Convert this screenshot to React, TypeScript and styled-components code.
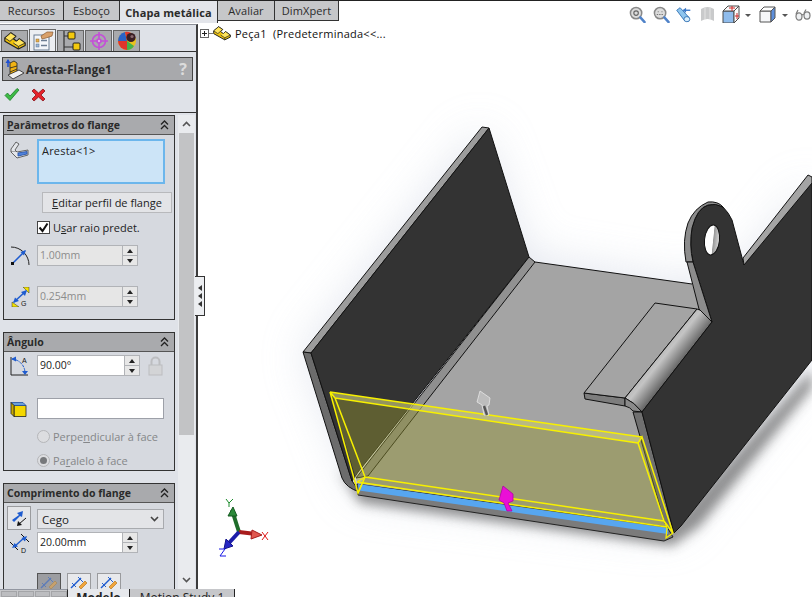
import styled, { createGlobalStyle } from 'styled-components';

const GlobalStyle = createGlobalStyle`
  html, body {
    margin: 0;
    padding: 0;
    background: #fff;
  }
  * {
    box-sizing: border-box;
  }
`;

const Root = styled.div`
  width: 812px;
  height: 597px;
  display: flex;
  flex-direction: column;
  overflow: hidden;
  font-family: 'Open Sans', 'Liberation Sans', sans-serif;
  font-size: 11px;
  color: #222;
  background: #fff;
`;

const TopTabs = styled.div`
  height: 23px;
  flex: none;
  display: flex;
  align-items: flex-start;
  border-top: 1px solid #222;
  background: linear-gradient(to right, #dfe2e8 197px, #fff 197px);
`;

const TopTab = styled.div<{ $width: number; $active?: boolean }>`
  width: ${(p) => p.$width}px;
  height: ${(p) => (p.$active ? 22 : 20)}px;
  display: flex;
  align-items: center;
  justify-content: center;
  font-size: 11px;
  letter-spacing: 0.1px;
  font-weight: ${(p) => (p.$active ? 700 : 400)};
  color: #2b2b2b;
  background: ${(p) => (p.$active ? '#e3e5ea' : '#c6c7c9')};
  border-right: 1px solid #333;
  border-bottom: ${(p) => (p.$active ? 'none' : '1px solid #333')};
`;

const ViewTools = styled.div`
  margin: 4px -3px 0 auto;
  display: flex;
  align-items: center;
`;

const ToolSlot = styled.div<{ $width: number }>`
  width: ${(p) => p.$width}px;
  display: flex;
  align-items: center;
  justify-content: center;
`;

const Caret = styled.span`
  margin-top: 2px;
  border-left: 3px solid transparent;
  border-right: 3px solid transparent;
  border-top: 3px solid #555;
`;

const Main = styled.div`
  flex: 1;
  min-height: 0;
  display: flex;
`;

const Panel = styled.div`
  width: 198px;
  flex: none;
  display: flex;
  flex-direction: column;
  background: #dfe2e8;
  border-top: 1px solid #8b8e96;
  border-right: 2px solid #3c3c3c;
  margin-top: 1px;
`;

const PanelTabs = styled.div`
  height: 27px;
  flex: none;
  display: flex;
  align-items: flex-end;
  gap: 1px;
  padding-left: 1px;
  border-bottom: 1px solid #333;
`;

const PanelTab = styled.div<{ $active?: boolean }>`
  width: 27px;
  height: ${(p) => (p.$active ? 22 : 21)}px;
  display: flex;
  align-items: center;
  justify-content: center;
  background: ${(p) => (p.$active ? '#eceef2' : '#a9aaad')};
  border: 1px solid #666;
  border-bottom: none;
`;

const TitleBar = styled.div`
  height: 24px;
  margin: 5px 3px 0 2px;
  flex: none;
  display: flex;
  align-items: center;
  gap: 1px;
  padding: 0 5px 0 2px;
  background: #a8a9ac;
  border: 1px solid #444;
  font-size: 11.5px;
  font-weight: 700;
  color: #2a2a2a;
`;

const Help = styled.span`
  margin-left: auto;
  font-size: 16px;
  font-weight: 700;
  color: #dcdcdc;
`;

const Actions = styled.div`
  height: 32px;
  flex: none;
  display: flex;
  align-items: center;
  gap: 11px;
  padding: 0 0 4px 4px;
  border-bottom: 1px solid #333;
`;

const ScrollArea = styled.div`
  flex: 1;
  min-height: 0;
  display: flex;
  overflow: hidden;
  padding-top: 2px;
`;

const Sections = styled.div`
  width: 178px;
  flex: none;
  display: flex;
  flex-direction: column;
  gap: 12px;
  padding-left: 3px;
`;

const Section = styled.section<{ $height: number }>`
  width: 172px;
  height: ${(p) => p.$height}px;
  flex: none;
  background: #d6d9df;
  border: 1px solid #333;
`;

const SectionHead = styled.div`
  height: 19px;
  display: flex;
  align-items: center;
  justify-content: space-between;
  padding: 0 5px 0 3px;
  background: #a9aaad;
  border-bottom: 1px solid #555;
  font-size: 10.5px;
  font-weight: 700;
  color: #2a2a2a;
`;

const Row = styled.div<{ $top: number }>`
  display: flex;
  align-items: center;
  margin-top: ${(p) => p.$top}px;
  padding-left: 33px;
  position: relative;
`;

const RowIcon = styled.div<{ $top?: boolean }>`
  position: absolute;
  left: 6px;
  top: ${(p) => (p.$top ? '2px' : '50%')};
  transform: ${(p) => (p.$top ? 'none' : 'translateY(-50%)')};
  display: flex;
`;

const SelectionBox = styled.div`
  width: 128px;
  height: 45px;
  padding: 2px 3px;
  background: #cce4f7;
  border: 2px solid #6cb6ec;
  letter-spacing: 0.2px;
`;

const FlatButton = styled.div`
  width: 130px;
  height: 21px;
  margin-left: 5px;
  display: flex;
  align-items: center;
  justify-content: center;
  background: #e3e4e7;
  border: 1px solid #b8b9bc;
`;

const CheckLabel = styled.label`
  display: flex;
  align-items: center;
  gap: 3px;
`;

const CheckBox = styled.span`
  width: 13px;
  height: 13px;
  display: flex;
  align-items: center;
  justify-content: center;
  background: #fff;
  border: 1px solid #444;
`;

const Spin = styled.div<{ $disabled?: boolean; $width?: number }>`
  width: ${(p) => p.$width ?? 101}px;
  height: 21px;
  display: flex;
  background: ${(p) => (p.$disabled ? '#e6e6e6' : '#fff')};
  color: ${(p) => (p.$disabled ? '#8c8c8c' : '#222')};
  border: 1px solid #b1b3b7;
  font-size: 10.5px;
`;

const SpinText = styled.div`
  flex: 1;
  padding-left: 2px;
  line-height: 18px;
`;

const SpinButtons = styled.div`
  width: 15px;
  display: flex;
  flex-direction: column;
  border-left: 1px solid #b1b3b7;
  background: #e7e7e7;
`;

const SpinButton = styled.div<{ $down?: boolean }>`
  flex: 1;
  display: flex;
  align-items: center;
  justify-content: center;
  border-top: ${(p) => (p.$down ? '1px solid #b1b3b7' : 'none')};
  &::after {
    content: '';
    border-left: 3px solid transparent;
    border-right: 3px solid transparent;
    border-${(p) => (p.$down ? 'top' : 'bottom')}: 4px solid #222;
  }
`;

const LockSlot = styled.div`
  margin-left: 8px;
  display: flex;
`;

const TextField = styled.div`
  width: 127px;
  height: 21px;
  background: #fff;
  border: 1px solid #9da0a8;
`;

const RadioLabel = styled.div`
  display: flex;
  align-items: center;
  gap: 3px;
  color: #858789;
`;

const Radio = styled.span<{ $on?: boolean }>`
  width: 13px;
  height: 13px;
  display: flex;
  align-items: center;
  justify-content: center;
  border-radius: 50%;
  background: #dcdde0;
  border: 1px solid #b5b6b9;
  &::after {
    content: '';
    width: 7px;
    height: 7px;
    border-radius: 50%;
    background: ${(p) => (p.$on ? '#77797c' : 'transparent')};
  }
`;

const SquareButton = styled.div`
  position: absolute;
  left: 3px;
  top: -3px;
  width: 24px;
  height: 24px;
  display: flex;
  align-items: center;
  justify-content: center;
  background: #e4e5e8;
  border: 1px solid #9a9b9e;
`;

const SelectBox = styled.div`
  width: 127px;
  height: 20px;
  display: flex;
  align-items: center;
  justify-content: space-between;
  padding: 0 4px;
  background: #e3e4e7;
  border: 1px solid #a8aaae;
  font-size: 11.5px;
`;

const ToolRow = styled.div`
  display: flex;
  gap: 6px;
  margin: 20px 0 0 33px;
`;

const ToolButton = styled.div<{ $pressed?: boolean }>`
  width: 24px;
  height: 20px;
  display: flex;
  align-items: center;
  justify-content: center;
  background: ${(p) => (p.$pressed ? '#9c9da1' : '#e8e9ec')};
  border: 1px solid ${(p) => (p.$pressed ? '#555' : '#9a9b9e')};
`;

const ScrollBar = styled.div`
  width: 17px;
  flex: none;
  display: flex;
  flex-direction: column;
  background: #e9ebee;
`;

const ScrollArrow = styled.div`
  height: 18px;
  flex: none;
  display: flex;
  align-items: center;
  justify-content: center;
`;

const ScrollThumb = styled.div`
  height: 302px;
  margin: 0 1px;
  flex: none;
  background: #c2c3c5;
`;

const ScrollTrack = styled.div`
  flex: 1;
`;

const Viewport = styled.div`
  flex: 1;
  min-width: 0;
  position: relative;
  background: #fff;
`;

const ModelCanvas = styled.svg`
  position: absolute;
  inset: 0;
  width: 100%;
  height: 100%;
`;

const CollapseHandle = styled.div`
  position: absolute;
  left: -3px;
  top: 253px;
  width: 10px;
  height: 40px;
  display: flex;
  flex-direction: column;
  align-items: center;
  justify-content: center;
  gap: 2px;
  background: #eceef1;
  border: 1px solid #333;
  border-left: none;
`;

const HandleArrow = styled.span`
  border-top: 3px solid transparent;
  border-bottom: 3px solid transparent;
  border-right: 4px solid #333;
`;

const Tree = styled.div`
  position: absolute;
  left: 2px;
  top: 3px;
  display: flex;
  align-items: center;
  font-size: 11px;
  letter-spacing: 0.25px;
  color: #111;
`;

const Expander = styled.span`
  width: 9px;
  height: 9px;
  border: 1px solid #666;
  background: linear-gradient(#222, #222) center / 5px 1px no-repeat,
    linear-gradient(#222, #222) center / 1px 5px no-repeat, #fff;
`;

const TreeLink = styled.span`
  width: 4px;
  height: 1px;
  background: #777;
`;

const TreeText = styled.span`
  margin-left: 4px;
  white-space: pre;
`;

const BottomTabs = styled.div`
  height: 8px;
  flex: none;
  display: flex;
  overflow: hidden;
  background: #fff;
`;

const NavGroup = styled.div`
  width: 68px;
  display: flex;
  gap: 1px;
  padding: 1px 0 0 1px;
  background: #c6c7ca;
  border-right: 1px solid #222;
  border-top: 1px solid #9296a0;
`;

const NavButton = styled.span`
  width: 16px;
  background: #bcbdc0;
  border: 1px solid #a4a5a8;
`;

const BottomTab = styled.div<{ $width: number; $active?: boolean }>`
  width: ${(p) => p.$width}px;
  padding-top: 1px;
  text-align: center;
  font-size: 12px;
  line-height: 16px;
  font-weight: ${(p) => (p.$active ? 700 : 400)};
  background: ${(p) => (p.$active ? '#e6e8ec' : '#c6c7ca')};
  border-right: 1px solid #222;
`;

const PartIcon = ({ size = 26 }: { size?: number }) => (
  <svg width={size} height={size * 0.81} viewBox="0 0 26 21">
    <path d="M1 7 L8 1 L14 5 L11 8 L15 11 L18 8 L25 13 V16 L17 20 L1 11 Z" fill="#f0c20a" stroke="#222" strokeWidth="1.4" strokeLinejoin="round" />
    <path d="M1 7 L8 1 L14 5 L7 11 Z" fill="#ffe45c" stroke="#222" strokeWidth="1" strokeLinejoin="round" />
    <path d="M15 11 L18 8 L25 13 L17 17 L11 13" fill="#ffe45c" stroke="#222" strokeWidth="1" strokeLinejoin="round" />
    <path d="M17 17 V20" stroke="#222" strokeWidth="1" />
  </svg>
);

const PropertyIcon = () => (
  <svg width="22" height="20" viewBox="0 0 22 20">
    <rect x="2" y="4" width="15" height="15" fill="#f4f6fa" stroke="#6b7c92" />
    <rect x="4" y="8" width="3" height="3" fill="#e8b04c" stroke="#8a6a30" strokeWidth=".5" />
    <rect x="4" y="13" width="3" height="3" fill="#9db7d6" stroke="#56708f" strokeWidth=".5" />
    <path d="M9 9.5 H15 M9 14.5 H15" stroke="#6b7c92" strokeWidth="1.5" />
    <path d="M9 5 L15 1 L21 1 L20 5 L14 7 L10 8 Z" fill="#d9a06a" stroke="#8a5a30" strokeWidth=".7" />
  </svg>
);

const TreeTabIcon = () => (
  <svg width="22" height="21" viewBox="0 0 22 21">
    <path d="M4 0 V20 M4 5 H9 M4 16 H14" stroke="#333" strokeWidth="1.2" fill="none" />
    <rect x="8" y="1" width="7" height="7" rx="1" fill="#f3c90c" stroke="#222" />
    <rect x="13" y="12" width="7" height="7" rx="1" fill="#f3c90c" stroke="#222" />
  </svg>
);

const CrosshairIcon = () => (
  <svg width="20" height="20" viewBox="0 0 20 20" fill="none" stroke="#c44fd8" strokeWidth="1.6">
    <circle cx="10" cy="10" r="6.5" />
    <path d="M10 1 V19 M1 10 H19" />
    <circle cx="10" cy="10" r="2" fill="#e6a6ee" />
  </svg>
);

const AppearanceIcon = () => (
  <svg width="20" height="20" viewBox="0 0 20 20">
    <circle cx="10" cy="10" r="9" fill="#e9c21c" />
    <path d="M10 10 L1 10 A9 9 0 0 1 8 1 Z" fill="#2a63c8" />
    <path d="M10 10 L8 1 A9 9 0 0 1 14 2 Z" fill="#e0352b" />
    <path d="M10 10 L1 10 A9 9 0 0 0 10 19 Z" fill="#e0352b" />
    <path d="M10 19 A9 9 0 0 0 17 15 L10 10 Z" fill="#45b34a" />
    <circle cx="14" cy="6.5" r="4.6" fill="#3a1f24" />
    <circle cx="15" cy="5.5" r="1.6" fill="#8a6a70" />
  </svg>
);

const FlangeIcon = () => (
  <svg width="20" height="21" viewBox="0 0 20 21">
    <path d="M3 1 V8" stroke="#1f4fd0" strokeWidth="1.5" />
    <path d="M0.5 4 L3 0 L5.5 4 Z" fill="#1f4fd0" />
    <path d="M5 4 L9 2 L12 4 V13 L5 17 Z" fill="#f2b312" stroke="#222" strokeWidth=".8" />
    <path d="M5 9 L12 7 M5 13 L12 10" stroke="#222" strokeWidth=".8" />
    <path d="M3 16 L14 11 L19 14 L8 20 Z" fill="#f0f0f0" stroke="#222" strokeWidth=".8" />
  </svg>
);

const CheckIcon = () => (
  <svg width="16" height="15" viewBox="0 0 16 14">
    <path d="M1 8 L3.5 5.5 L6 8.5 L13 1 L15 2.5 L6 13 Z" fill="#3dbb45" stroke="#1c7c28" strokeWidth=".8" strokeLinejoin="round" />
  </svg>
);

const CrossIcon = () => (
  <svg width="15" height="14" viewBox="0 0 15 14">
    <path d="M1 3 L3 1 L7.5 5 L12 1 L14 3 L10 7 L14 11 L12 13 L7.5 9 L3 13 L1 11 L5 7 Z" fill="#e5222a" stroke="#8c1218" strokeWidth=".8" strokeLinejoin="round" />
  </svg>
);

const CollapseIcon = () => (
  <svg width="9" height="10" viewBox="0 0 9 10" fill="none" stroke="#222" strokeWidth="1.3">
    <path d="M1 4.5 L4.5 1 L8 4.5 M1 9 L4.5 5.5 L8 9" />
  </svg>
);

const EdgeSelectIcon = () => (
  <svg width="19" height="18" viewBox="0 0 19 18" fill="#e4e6ea" stroke="#555" strokeWidth=".9">
    <path d="M1 8 L6 1 L9 3 L5 9 L7 11 L1 11 Z" />
    <path d="M1 11 L7 17 L18 14 L18 9 L7 11" />
    <path d="M8 12 L17 10.5 L17 13 L8 15 Z" fill="#4f83dd" stroke="#2a55a8" />
  </svg>
);

const RadiusIcon = () => (
  <svg width="20" height="20" viewBox="0 0 20 20" fill="none">
    <path d="M1 1 A18 18 0 0 1 19 19" stroke="#222" />
    <path d="M3 17 L15 5" stroke="#1f5ccf" strokeWidth="1.5" />
    <path d="M16 4 L10.5 6 L14 9.5 Z" fill="#1f5ccf" />
    <rect x="1" y="16" width="3" height="3" fill="#111" />
  </svg>
);

const GapIcon = () => (
  <svg width="20" height="20" viewBox="0 0 20 20">
    <path d="M2 15 L9 20 L2 20 Z M13 0 L19 0 L19 6 Z" fill="#f4e200" stroke="#333" strokeWidth=".5" />
    <path d="M4 15 L16 4" stroke="#1f5ccf" strokeWidth="1.5" />
    <path d="M3 16 L5 10.5 L9 14 Z M17 3 L11 5 L15 9 Z" fill="#1f5ccf" />
    <text x="11" y="19" fontSize="7" fontFamily="Liberation Sans" fill="#111">G</text>
  </svg>
);

const AngleIcon = () => (
  <svg width="19" height="20" viewBox="0 0 19 20" fill="none">
    <path d="M1 1 V19 H18" stroke="#222" />
    <path d="M2 3 A14 14 0 0 1 15 17" stroke="#1f5ccf" strokeDasharray="3 1" />
    <path d="M1 3 L6 0.5 L6 5.5 Z M15 19 L12 15 L18 15 Z" fill="#1f5ccf" />
    <text x="12" y="7" fontSize="7" fontFamily="Liberation Sans" fill="#111">A</text>
  </svg>
);

const CubeIcon = () => (
  <svg width="17" height="17" viewBox="0 0 17 17">
    <path d="M4 5 H16 V16 H4 Z" fill="#f4d700" stroke="#222" strokeWidth=".8" />
    <path d="M1 2 L13 2 L16 5 H4 Z" fill="#6b9fd9" stroke="#1f4fa0" strokeWidth=".8" />
    <path d="M1 2 L4 5 V16 L1 13 Z" fill="#c9aa00" stroke="#222" strokeWidth=".8" />
  </svg>
);

const LockIcon = () => (
  <svg width="15" height="20" viewBox="0 0 15 20">
    <path d="M3.5 9 V5.5 A4 4 0 0 1 11.5 5.5 V9" fill="none" stroke="#bcbdc0" strokeWidth="2" />
    <rect x="1" y="9" width="13" height="10" fill="#d3d4d6" stroke="#bcbdc0" />
  </svg>
);

const DirectionIcon = () => (
  <svg width="16" height="16" viewBox="0 0 16 16">
    <path d="M1 10 L8 5 L6 3 L12 1 L11 7 L9 6 L3 12 Z" fill="#1f5ccf" />
    <path d="M15 8 L8 14" stroke="#111" />
    <path d="M6 16 L7 11 L11 15 Z" fill="#111" />
  </svg>
);

const DepthIcon = () => (
  <svg width="20" height="20" viewBox="0 0 20 20">
    <path d="M0 9 L8 17 M11 1 L19 9" stroke="#111" />
    <path d="M4 14 L15 4" stroke="#1f5ccf" strokeWidth="1.4" />
    <path d="M2 15 L4.5 10 L8 13.5 Z M17 3 L11.5 5 L15 8.5 Z" fill="#1f5ccf" />
    <text x="11" y="20" fontSize="7" fontFamily="Liberation Sans" fill="#111">D</text>
  </svg>
);

const FlangePositionIcon = ({ faded }: { faded?: boolean }) => (
  <svg width="18" height="16" viewBox="0 0 18 16" opacity={faded ? 0.5 : 1}>
    <path d="M1 13 L11 3" stroke="#1f5ccf" strokeWidth="1.5" />
    <path d="M2 8 L6 12 M8 2 L13 7" stroke="#1f5ccf" />
    <path d="M9 12 L15 6 L17 8 L11 14 Z" fill="#f2a53a" stroke="#a86a10" strokeWidth=".6" />
  </svg>
);

const Magnifier = ({ variant }: { variant?: 'fit' | 'area' }) => (
  <svg width="17" height="18" viewBox="0 0 18 19">
    <circle cx="7.5" cy="7.5" r="6" fill="#dcdcdc" stroke="#888" strokeWidth="1.6" />
    {variant === 'fit' ? (
      <circle cx="7.5" cy="7.5" r="2.4" fill="none" stroke="#666" strokeWidth="1.2" />
    ) : (
      <path d="M4 9 H11 M5 6 H6 M9 6 H10" stroke="#777" strokeWidth="1.2" strokeDasharray="1.5 1" />
    )}
    <path d="M12 12 L16.5 17" stroke="#4f82c8" strokeWidth="2.6" strokeLinecap="round" />
  </svg>
);

const PreviousViewIcon = () => (
  <svg width="17" height="17" viewBox="0 0 20 20">
    <path d="M2 5 L6 2 L16 13 L16 18 L11 17 Z" fill="#8ec5ee" stroke="#2b6cb0" />
    <ellipse cx="14" cy="15.5" rx="3.5" ry="3" fill="#d8eefc" stroke="#2b6cb0" />
    <path d="M10 5 H18" stroke="#3b78c8" strokeWidth="1.6" />
    <path d="M9 5 L13 2 V8 Z" fill="#3b78c8" />
  </svg>
);

const SectionViewIcon = () => (
  <svg width="15" height="17" viewBox="0 0 15 17">
    <path d="M1 3 Q7.5 -1 14 3 V15 Q7.5 11 1 15 Z" fill="#c9cacb" />
    <path d="M5 2 V13 M10 2 V13" stroke="#e4e4e4" />
  </svg>
);

const OrientIcon = () => (
  <svg width="18" height="19" viewBox="0 0 18 19">
    <path d="M1 6 H12 V18 H1 Z" fill="#8fbcec" stroke="#4a4a4a" />
    <path d="M1 6 L6 1 H17 L12 6 Z" fill="#f8f8f8" stroke="#4a4a4a" />
    <path d="M12 6 L17 1 V13 L12 18 Z" fill="#fbfbfb" stroke="#4a4a4a" />
    <path d="M7 3 H13 M10 1 V6 M13 11 H17 M15 8 V14" stroke="#d02a2a" />
  </svg>
);

const DisplayIcon = () => (
  <svg width="17" height="17" viewBox="0 0 17 17">
    <path d="M1 5 H12 V16 H1 Z" fill="#f6f7f9" stroke="#555" />
    <path d="M1 5 L5 1 H16 L12 5 Z" fill="#fff" stroke="#555" />
    <path d="M12 5 L16 1 V12 L12 16 Z" fill="#5d8fdc" stroke="#555" />
  </svg>
);

const GlassesIcon = () => (
  <svg width="16" height="12" viewBox="0 0 16 12" fill="#eef0f2" stroke="#7c7c7c" strokeWidth="1.2">
    <ellipse cx="4" cy="7.5" rx="3" ry="3.6" />
    <ellipse cx="12" cy="6.5" rx="3" ry="3.6" />
    <path d="M7 6 L9 5 M1 5 L3 1 M9 4 L11 0.5" fill="none" />
  </svg>
);

const Model = () => (
  <ModelCanvas viewBox="198 23 614 566">
    <defs>
      <filter id="softHalo" x="-40%" y="-40%" width="180%" height="180%">
        <feGaussianBlur stdDeviation="22" />
      </filter>
      <filter id="softShadow" x="-20%" y="-20%" width="140%" height="140%">
        <feGaussianBlur stdDeviation="6" />
      </filter>
      <linearGradient id="leftFold" x1="0" y1="0" x2="1" y2="0.8">
        <stop offset="0" stopColor="#555" />
        <stop offset="0.5" stopColor="#8c8c8c" />
        <stop offset="1" stopColor="#a8a8a8" />
      </linearGradient>
      <linearGradient id="tabFold" gradientUnits="userSpaceOnUse" x1="655" y1="345" x2="680" y2="365">
        <stop offset="0" stopColor="#a8a8a8" />
        <stop offset="0.45" stopColor="#c4c4c4" />
        <stop offset="1" stopColor="#5f5f5f" />
      </linearGradient>
      <linearGradient id="holeWall" x1="0" y1="0" x2="1" y2="0">
        <stop offset="0" stopColor="#fff" />
        <stop offset="0.55" stopColor="#fff" />
        <stop offset="0.6" stopColor="#999" />
        <stop offset="1" stopColor="#ddd" />
      </linearGradient>
    </defs>

    <path d="M303 352 L482 127 L529 257 L692 284 L744 265 L812 180 V360 L673 533 L358 493 Z" fill="#cdd3e2" opacity="0.55" filter="url(#softHalo)" />
    <path d="M338 470 L360 503 L672 546 L700 526 L812 388 L812 370 L672 525 L358 485 Z" fill="#4a4a4a" opacity="0.6" filter="url(#softShadow)" />

    <path d="M482 127 L489 128 L311 353 L303 352 Z" fill="#9c9c9c" stroke="#111" strokeLinejoin="round" />
    <path d="M303 352 L311 353 L352 481 L360 492 Q346 488 342 478 Z" fill="#6c6c6c" stroke="#111" strokeLinejoin="round" />
    <path d="M489 128 L529 257 L358 472 L352 481 L311 353 Z" fill="#333" stroke="#111" strokeLinejoin="round" />

    <path d="M535 262 L692 284 L712 322 L642 412 L668 528 L358 486 L368 474 Z" fill="#a4a4a4" />
    <path d="M535 262 L692 284" stroke="#111" fill="none" />
    <path d="M529 257 L535 262 L368 476 L356 478 Z" fill="url(#leftFold)" stroke="#111" strokeLinejoin="round" />

    <path d="M357 484 L667 527 L673 537 L664 541 L358 495 Z" fill="#7b7b7b" stroke="#222" strokeLinejoin="round" />
    <path d="M358 484 L668 528 L668 534 L359 490.5 Z" fill="#57a6ef" />

    <path d="M584 393 L625 398 L625 406 L585 399 Z" fill="#7d7d7d" stroke="#111" strokeLinejoin="round" />
    <path d="M655 303 L697 309 L625 398 L584 393 Z" fill="#a4a4a4" stroke="#111" strokeLinejoin="round" />
    <path d="M697 309 Q706 311 712 322 L642 412 Q634 402 625 398 Z" fill="url(#tabFold)" stroke="#111" strokeLinejoin="round" />
    <path d="M625 398 Q634 402 642 412 L633 411 Q630 407 625 406 Z" fill="#8a8a8a" stroke="#111" strokeLinejoin="round" />

    <path d="M633 412 L642 412 L674 532 L665 524 Z" fill="#707070" stroke="#111" strokeLinejoin="round" />
    <path d="M642 412 L712 322 L693 262 Q689 245 692 228 Q697 208 708 205 Q718 203 723 207 Q729 213 732 220 L744 265 L812 180 V360 L681 526 L674 533 Z" fill="#333" stroke="#111" strokeLinejoin="round" />
    <path d="M686 262 Q682 240 688 223 Q694 208 708 202 Q718 201 723 207 Q716 203 708 205 Q697 208 692 228 Q689 245 693 262 Z" fill="#8c8c8c" stroke="#111" strokeLinejoin="round" />
    <path d="M687 262 L693 262 L712 322 L699 309 Z" fill="#8c8c8c" stroke="#111" strokeLinejoin="round" />
    <path d="M743 258 L808 175 L812 177 V183 L744 265 Z" fill="#a4a4a4" stroke="#111" strokeLinejoin="round" />
    <ellipse cx="712" cy="240" rx="7.5" ry="15" transform="rotate(6 712 240)" fill="url(#holeWall)" stroke="#111" />

    <path d="M330 392 L642 437 L667 527 L357 482 Z" fill="rgb(145,145,51)" fillOpacity="0.46" />
    <path d="M330 392 L642 437 L638 443 L335 398 Z" fill="#e6e6a0" fillOpacity="0.4" />
    <path d="M330 392 L642 437 M335 398 L638 443 M330 392 L335 398 L365 477 L358 493 Z M642 437 L638 443 L664 521 L673 533 Z M365 477 L664 521 M357 482 L667 527" fill="none" stroke="#f7f000" strokeWidth="1.5" />
    <path d="M357 482 L365 477 M664 521 L667 527 M358 493 L362 484 M673 533 L666 538 L667 527" fill="none" stroke="#f7f000" strokeWidth="1.2" />

    <path d="M480 391 L490 398 L489 405 L487 406 L489 415 L484 415 L482 405 L477 402 Z" fill="#bdbdbd" stroke="#e6e6e6" strokeWidth=".8" />
    <path d="M484 406 L487 415" stroke="#555" strokeWidth="2.4" />
    <path d="M503 486 L513 494 L513 501 L508 503 L512 511 L507 511 L504 503 L499 500 Z" fill="#ea0fd6" stroke="#b400a4" strokeWidth=".8" />

    <path d="M239 532 L232 510" stroke="#1f6d2a" strokeWidth="4" />
    <path d="M233 507 L237 516 L228 516 Z" fill="#2c8a3a" stroke="#155a20" />
    <path d="M226 499 L229 503 L233 499 M229 503 V507" fill="none" stroke="#1a8a2a" />
    <path d="M239 532 L256 534" stroke="#a81c1c" strokeWidth="4" />
    <path d="M262 535 L252 530 L251 539 Z" fill="#e0584f" stroke="#a81c1c" />
    <path d="M262 532 L268 540 M268 532 L262 540" stroke="#e01414" />
    <path d="M239 532 L228 544" stroke="#1c1ca8" strokeWidth="4" />
    <path d="M224 549 L226 539 L233 546 Z" fill="#2626c4" stroke="#14148a" />
    <path d="M219 549 H225 L220 556 H226 M218 556" fill="none" stroke="#1414e6" />
  </ModelCanvas>
);

const App = () => {
  return (
    <Root>
      <GlobalStyle />
      <TopTabs>
        <TopTab $width={64}>Recursos</TopTab>
        <TopTab $width={56}>Esboço</TopTab>
        <TopTab $width={98} $active>Chapa metálica</TopTab>
        <TopTab $width={57}>Avaliar</TopTab>
        <TopTab $width={64}>DimXpert</TopTab>
        <ViewTools>
          <ToolSlot $width={24}><Magnifier variant="fit" /></ToolSlot>
          <ToolSlot $width={24}><Magnifier variant="area" /></ToolSlot>
          <ToolSlot $width={21}><PreviousViewIcon /></ToolSlot>
          <ToolSlot $width={26}><SectionViewIcon /></ToolSlot>
          <ToolSlot $width={21}><OrientIcon /></ToolSlot>
          <ToolSlot $width={14}><Caret /></ToolSlot>
          <ToolSlot $width={24}><DisplayIcon /></ToolSlot>
          <ToolSlot $width={12}><Caret /></ToolSlot>
          <ToolSlot $width={24}><GlassesIcon /></ToolSlot>
        </ViewTools>
      </TopTabs>
      <Main>
        <Panel>
          <PanelTabs>
            <PanelTab><PartIcon size={22} /></PanelTab>
            <PanelTab $active><PropertyIcon /></PanelTab>
            <PanelTab><TreeTabIcon /></PanelTab>
            <PanelTab><CrosshairIcon /></PanelTab>
            <PanelTab><AppearanceIcon /></PanelTab>
          </PanelTabs>
          <TitleBar>
            <FlangeIcon />
            Aresta-Flange1
            <Help>?</Help>
          </TitleBar>
          <Actions>
            <CheckIcon />
            <CrossIcon />
          </Actions>
          <ScrollArea>
            <Sections>
              <Section $height={205}>
                <SectionHead>
                  <span><u>P</u>arâmetros do flange</span>
                  <CollapseIcon />
                </SectionHead>
                <Row $top={4}>
                  <RowIcon $top><EdgeSelectIcon /></RowIcon>
                  <SelectionBox>Aresta&lt;1&gt;</SelectionBox>
                </Row>
                <Row $top={8}>
                  <FlatButton><span><u>E</u>ditar perfil de flange</span></FlatButton>
                </Row>
                <Row $top={7}>
                  <CheckLabel>
                    <CheckBox>
                      <svg width="11" height="11" viewBox="0 0 11 11">
                        <path d="M1.5 5.5 L4.5 9 L9.5 1.5" fill="none" stroke="#111" strokeWidth="2" />
                      </svg>
                    </CheckBox>
                    <span>U<u>s</u>ar raio predet.</span>
                  </CheckLabel>
                </Row>
                <Row $top={10}>
                  <RowIcon><RadiusIcon /></RowIcon>
                  <Spin $disabled>
                    <SpinText>1.00mm</SpinText>
                    <SpinButtons><SpinButton /><SpinButton $down /></SpinButtons>
                  </Spin>
                </Row>
                <Row $top={20}>
                  <RowIcon><GapIcon /></RowIcon>
                  <Spin $disabled>
                    <SpinText>0.254mm</SpinText>
                    <SpinButtons><SpinButton /><SpinButton $down /></SpinButtons>
                  </Spin>
                </Row>
              </Section>
              <Section $height={139}>
                <SectionHead>
                  <span>Ân<u>g</u>ulo</span>
                  <CollapseIcon />
                </SectionHead>
                <Row $top={3}>
                  <RowIcon><AngleIcon /></RowIcon>
                  <Spin $width={103}>
                    <SpinText>90.00°</SpinText>
                    <SpinButtons><SpinButton /><SpinButton $down /></SpinButtons>
                  </Spin>
                  <LockSlot><LockIcon /></LockSlot>
                </Row>
                <Row $top={22}>
                  <RowIcon><CubeIcon /></RowIcon>
                  <TextField />
                </Row>
                <Row $top={10}>
                  <RadioLabel><Radio /><span>Perpe<u>n</u>dicular à face</span></RadioLabel>
                </Row>
                <Row $top={9}>
                  <RadioLabel><Radio $on /><span>Pa<u>r</u>alelo à face</span></RadioLabel>
                </Row>
              </Section>
              <Section $height={130}>
                <SectionHead>
                  <span>Comprimento do f<u>l</u>ange</span>
                  <CollapseIcon />
                </SectionHead>
                <Row $top={6}>
                  <SquareButton><DirectionIcon /></SquareButton>
                  <SelectBox>
                    Cego
                    <svg width="9" height="6" viewBox="0 0 9 6" fill="none" stroke="#444" strokeWidth="1.6">
                      <path d="M1 1 L4.5 4.5 L8 1" />
                    </svg>
                  </SelectBox>
                </Row>
                <Row $top={3}>
                  <RowIcon><DepthIcon /></RowIcon>
                  <Spin>
                    <SpinText>20.00mm</SpinText>
                    <SpinButtons><SpinButton /><SpinButton $down /></SpinButtons>
                  </Spin>
                </Row>
                <ToolRow>
                  <ToolButton $pressed><FlangePositionIcon faded /></ToolButton>
                  <ToolButton><FlangePositionIcon /></ToolButton>
                  <ToolButton><FlangePositionIcon /></ToolButton>
                </ToolRow>
              </Section>
            </Sections>
            <ScrollBar>
              <ScrollArrow>
                <svg width="9" height="6" viewBox="0 0 9 6" fill="none" stroke="#555" strokeWidth="1.6">
                  <path d="M1 5 L4.5 1.5 L8 5" />
                </svg>
              </ScrollArrow>
              <ScrollThumb />
              <ScrollTrack />
              <ScrollArrow>
                <svg width="9" height="6" viewBox="0 0 9 6" fill="none" stroke="#555" strokeWidth="1.6">
                  <path d="M1 1 L4.5 4.5 L8 1" />
                </svg>
              </ScrollArrow>
            </ScrollBar>
          </ScrollArea>
        </Panel>
        <Viewport>
          <Model />
          <CollapseHandle>
            <HandleArrow />
            <HandleArrow />
            <HandleArrow />
          </CollapseHandle>
          <Tree>
            <Expander />
            <TreeLink />
            <PartIcon size={18} />
            <TreeText>Peça1  (Predeterminada&lt;&lt;...</TreeText>
          </Tree>
        </Viewport>
      </Main>
      <BottomTabs>
        <NavGroup>
          <NavButton />
          <NavButton />
          <NavButton />
          <NavButton />
        </NavGroup>
        <BottomTab $width={62} $active>Modelo</BottomTab>
        <BottomTab $width={105}>Motion Study 1</BottomTab>
      </BottomTabs>
    </Root>
  );
};

export default App;
